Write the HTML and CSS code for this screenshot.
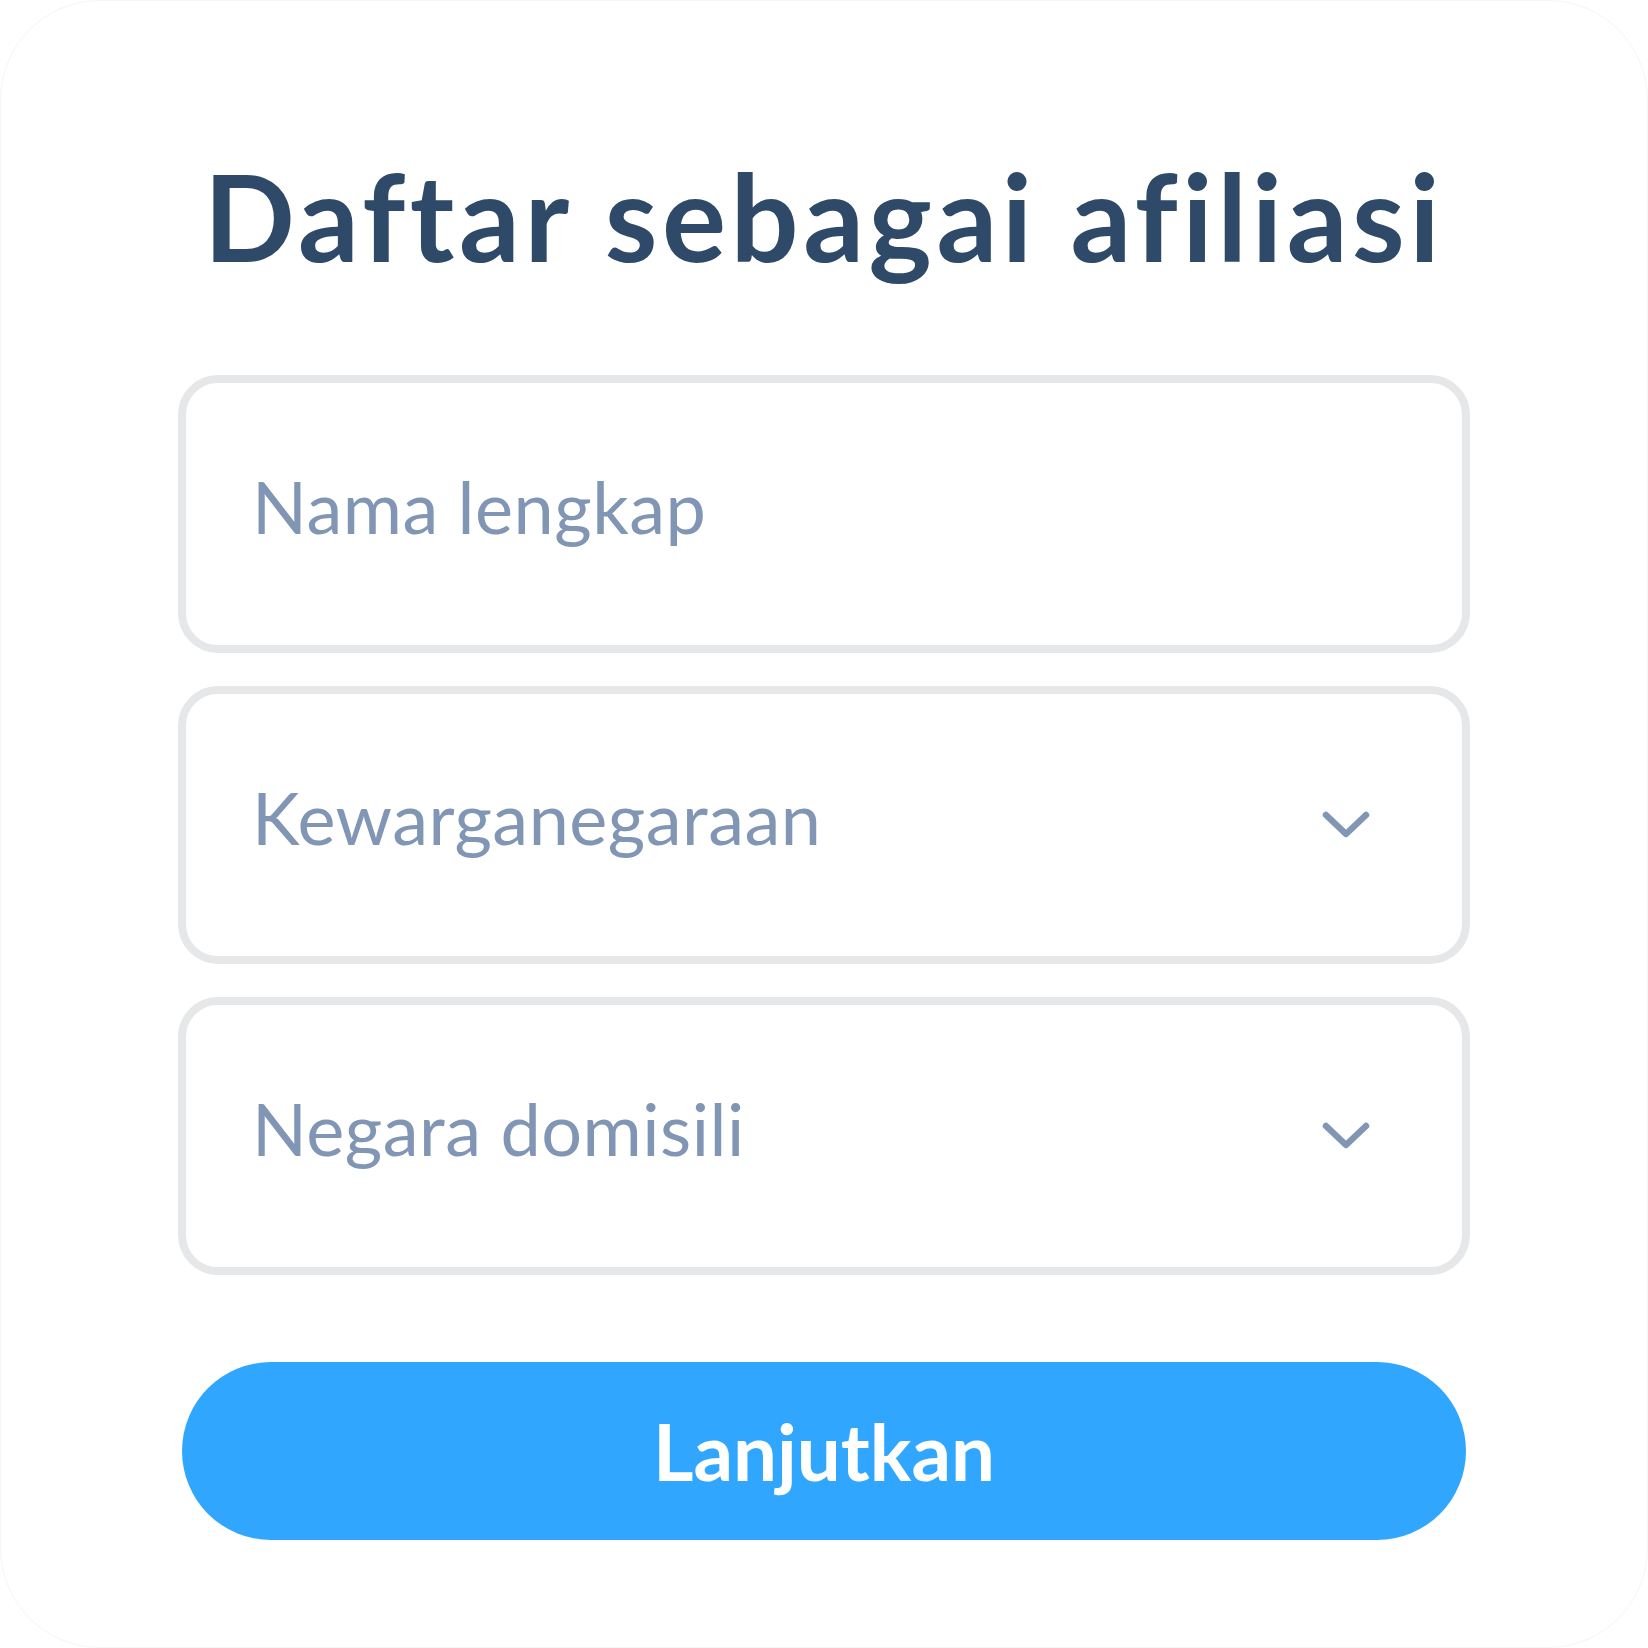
FILE: index.html
```html
<!DOCTYPE html>
<html lang="id">
<head>
  <meta charset="UTF-8" />
  <meta name="viewport" content="width=device-width, initial-scale=1.0" />
  <title>Daftar sebagai afiliasi</title>
  <link rel="stylesheet" href="styles.css">
</head>
<body>
  <main class="card">
    <h1>Daftar sebagai afiliasi</h1>

    <form class="signup">
      <div class="field">
        <input type="text" id="fullName" placeholder="Nama lengkap" />
      </div>
      <div class="field">
        <select id="citizenship">
          <option value="" selected disabled>Kewarganegaraan</option>
          <option value="id">Indonesia</option>
          <option value="other">Lainnya</option>
        </select>
        <svg class="chevron" viewBox="0 0 48 28" width="48" height="28">
          <polyline points="4,4 24,23 44,4" />
        </svg>
      </div>
      <div class="field">
        <select id="country">
          <option value="" selected disabled>Negara domisili</option>
          <option value="id">Indonesia</option>
          <option value="other">Lainnya</option>
        </select>
        <svg class="chevron" viewBox="0 0 48 28" width="48" height="28">
          <polyline points="4,4 24,23 44,4" />
        </svg>
      </div>

      <button type="button" class="next">Lanjutkan</button>
    </form>
  </main>
</body>
</html>
```

FILE: styles.css
```css
html,
body {
  margin: 0;
  padding: 0;
  background: #fff;
}
body {
  font-family: Lato, "Noto Sans", sans-serif;
}
.card {
  box-sizing: border-box;
  width: 1648px;
  height: 1648px;
  border: 1px solid #f5f5f5;
  border-radius: 100px;
  background: #fff;
  padding: 155px 177px 0;
}
h1 {
  margin: 0;
  font-size: 120px;
  line-height: 1;
  font-weight: 700;
  color: #2f4a69;
  text-align: center;
  letter-spacing: 4.5px;
}
.signup {
  display: flex;
  flex-direction: column;
  gap: 33px;
  margin-top: 99px;
}
.field {
  box-sizing: border-box;
  display: flex;
  align-items: center;
  height: 278px;
  border: 8px solid #e6e7e9;
  border-radius: 40px;
  padding: 0 92px 0 66px;
}
.field input,
.field select {
  flex: 1;
  border: none;
  outline: none;
  background: transparent;
  padding: 0 0 16px;
  margin: 0;
  font-family: inherit;
  font-size: 72px;
  letter-spacing: 0.5px;
  color: #8195b4;
  -webkit-appearance: none;
  appearance: none;
}
.field input::placeholder {
  color: #8195b4;
  opacity: 1;
}
.chevron {
  flex: none;
}
.chevron polyline {
  fill: none;
  stroke: #8195b4;
  stroke-width: 6.5;
  stroke-linecap: round;
  stroke-linejoin: round;
}
.next {
  margin: 54px 4px 0;
  height: 178px;
  border: none;
  border-radius: 89px;
  background: #31a6fe;
  color: #fff;
  font-family: inherit;
  font-size: 78px;
  font-weight: 700;
  cursor: pointer;
}
```
